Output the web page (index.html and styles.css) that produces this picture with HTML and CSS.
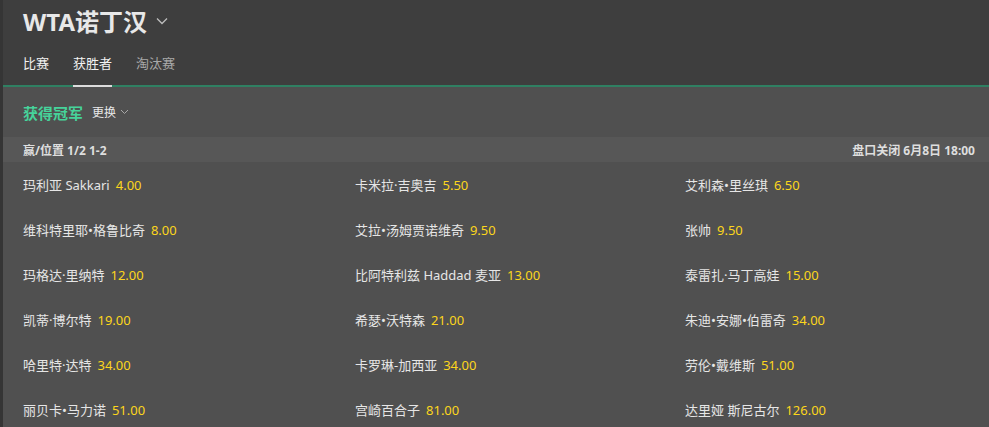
FILE: index.html
```html
<!DOCTYPE html>
<html lang="zh">
<head>
    <meta charset="UTF-8">
    <title>WTA诺丁汉</title>
    <link rel="stylesheet" href="styles.css">
</head>
<body>
    <div class="page">
        <!-- Event header -->
        <div class="top">
            <h1 class="title">WTA诺丁汉
                <svg class="chev" width="12" height="8" viewBox="0 0 12 8"><path d="M1 1.5 L6 6.5 L11 1.5" fill="none" stroke="#bdbdbd" stroke-width="1.3"/></svg>
            </h1>
            <div class="tabs">
                <span class="tab">比赛</span>
                <span class="tab active">获胜者</span>
                <span class="tab dim">淘汰赛</span>
            </div>
        </div>

        <!-- Market -->
        <div class="market">
            <div class="market-head">
                <span class="market-name">获得冠军</span>
                <span class="switch">更换
                    <svg width="9" height="6" viewBox="0 0 9 6"><path d="M1 1 L4.5 4.5 L8 1" fill="none" stroke="#a8a8a8" stroke-width="1"/></svg>
                </span>
            </div>
            <div class="bar">
                <span>赢/位置 1/2 1-2</span>
                <span>盘口关闭 6月8日 18:00</span>
            </div>
            <div class="grid">
                <div class="sel">玛利亚 Sakkari<b>4.00</b></div>
                <div class="sel">卡米拉·吉奥吉<b>5.50</b></div>
                <div class="sel">艾利森•里丝琪<b>6.50</b></div>
                <div class="sel">维科特里耶•格鲁比奇<b>8.00</b></div>
                <div class="sel">艾拉•汤姆贾诺维奇<b>9.50</b></div>
                <div class="sel">张帅<b>9.50</b></div>
                <div class="sel">玛格达·里纳特<b>12.00</b></div>
                <div class="sel">比阿特利兹 Haddad 麦亚<b>13.00</b></div>
                <div class="sel">泰雷扎·马丁高娃<b>15.00</b></div>
                <div class="sel">凯蒂·博尔特<b>19.00</b></div>
                <div class="sel">希瑟•沃特森<b>21.00</b></div>
                <div class="sel">朱迪•安娜•伯雷奇<b>34.00</b></div>
                <div class="sel">哈里特·达特<b>34.00</b></div>
                <div class="sel">卡罗琳-加西亚<b>34.00</b></div>
                <div class="sel">劳伦•戴维斯<b>51.00</b></div>
                <div class="sel">丽贝卡•马力诺<b>51.00</b></div>
                <div class="sel">宫崎百合子<b>81.00</b></div>
                <div class="sel">达里娅 斯尼古尔<b>126.00</b></div>
            </div>
        </div>
    </div>
</body>
</html>
```

FILE: styles.css
```css
* {
    margin: 0;
    padding: 0;
    box-sizing: border-box;
}

body {
    background: #505050;
    font-family: "Noto Sans", "Noto Sans CJK SC", sans-serif;
    color: #e4e4e4;
    overflow: hidden;
}

.page {
    border-left: 3px solid #353535;
    min-height: 100vh;
}

/* Header */
.top {
    background: #3e3e3e;
    border-bottom: 2px solid #2f8062;
}

.title {
    display: flex;
    align-items: center;
    gap: 9px;
    height: 40px;
    padding: 0 20px;
    font-size: 24px;
    font-weight: bold;
    color: #e8e8e8;
}

.chev {
    margin-top: 2px;
}

.tabs {
    display: flex;
    gap: 24px;
    padding: 0 20px;
    height: 45px;
    align-items: stretch;
}

.tab {
    display: flex;
    align-items: center;
    font-size: 13px;
    color: #f2f2f2;
    position: relative;
}

.tab.active::after {
    content: '';
    position: absolute;
    left: 0;
    right: 0;
    bottom: -2px;
    height: 2px;
    background: #dcdcdc;
}

.tab.dim {
    color: #a9a9a9;
}

/* Market */
.market-head {
    display: flex;
    align-items: center;
    gap: 9px;
    height: 50px;
    padding: 0 20px;
}

.market-name {
    font-size: 15px;
    font-weight: bold;
    color: #46d39b;
}

.switch {
    display: flex;
    align-items: center;
    gap: 4px;
    font-size: 12px;
    color: #e8e8e8;
}

.bar {
    display: flex;
    justify-content: space-between;
    align-items: center;
    height: 25px;
    padding: 0 14px 0 20px;
    background: #575757;
    font-size: 12px;
    font-weight: bold;
    color: #dedede;
}

.grid {
    display: grid;
    grid-template-columns: 332px 330px 1fr;
    padding: 0 20px;
}

.sel {
    display: flex;
    align-items: center;
    height: 45px;
    font-size: 13px;
    color: #e6e6e6;
}

.sel b {
    font-weight: normal;
    color: #fcd61c;
    margin-left: 6px;
}
```
